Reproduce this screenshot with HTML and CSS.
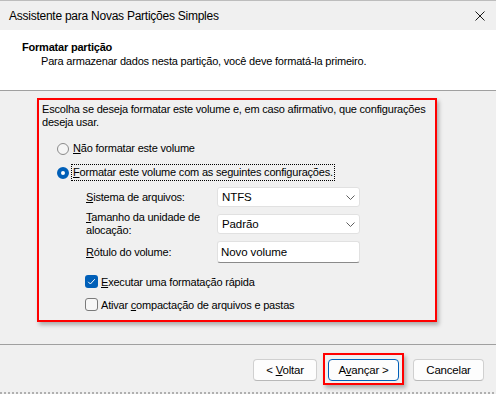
FILE: index.html
```html
<!DOCTYPE html>
<html lang="pt-BR">
<head>
<meta charset="utf-8">
<title>Assistente para Novas Partições Simples</title>
<link rel="stylesheet" href="styles.css">
</head>
<body>
<div class="win">
  <div class="topedge"></div>
  <div class="titlebar">
    <span class="title">Assistente para Novas Partições Simples</span>
    <svg class="close" width="10" height="10" viewBox="0 0 10 10"><path d="M0.5 0.5 L9.5 9.5 M9.5 0.5 L0.5 9.5" stroke="#1a1a1a" stroke-width="1" fill="none"/></svg>
  </div>
  <div class="header">
    <div class="h-title">Formatar partição</div>
    <div class="h-sub">Para armazenar dados nesta partição, você deve formatá-la primeiro.</div>
  </div>
  <div class="main">
    <div class="panel">
      <p class="intro">Escolha se deseja formatar este volume e, em caso afirmativo, que configurações<br>deseja usar.</p>
      <div class="opt-row first"><span class="radio"></span><span class="opt-text"><u>N</u>ão formatar este volume</span></div>
      <div class="opt-row second"><span class="radio on"></span><span class="opt-text focus"><u>F</u>ormatar este volume com as seguintes configurações.</span></div>
      <div class="form">
        <div class="lbl"><u>S</u>istema de arquivos:</div>
        <div class="select">NTFS<svg class="chev" width="9" height="5" viewBox="0 0 9 5"><path d="M0.5 0.5 L4.5 4.5 L8.5 0.5" stroke="#5f5f5f" stroke-width="1" fill="none"/></svg></div>
        <div class="lbl"><u>T</u>amanho da unidade de<br>alocação:</div>
        <div class="select">Padrão<svg class="chev" width="9" height="5" viewBox="0 0 9 5"><path d="M0.5 0.5 L4.5 4.5 L8.5 0.5" stroke="#5f5f5f" stroke-width="1" fill="none"/></svg></div>
        <div class="lbl"><u>R</u>ótulo do volume:</div>
        <div class="input">Novo volume</div>
      </div>
      <div class="chk-row first"><span class="check on"><svg width="13" height="13" viewBox="0 0 13 13"><path d="M3.2 6.8 L5.4 9 L9.8 4.2" stroke="#fff" stroke-width="1" fill="none"/></svg></span><span><u>E</u>xecutar uma formatação rápida</span></div>
      <div class="chk-row"><span class="check"></span><span>Ativar <u>c</u>ompactação de arquivos e pastas</span></div>
    </div>
  </div>
  <div class="footer">
    <button class="btn back">&lt; <u>V</u>oltar</button>
    <span class="hl"><button class="btn default">A<u>v</u>ançar &gt;</button></span>
    <button class="btn cancel">Cancelar</button>
  </div>
  <div class="bottomedge"></div>
</div>
</body>
</html>
```
FILE: styles.css
```css
html, body {
  margin: 0;
  padding: 0;
  background: #f0f0f0;
}
.win {
  width: 496px;
  height: 394px;
  display: flex;
  flex-direction: column;
  font-family: "Liberation Sans", Arial, sans-serif;
  font-size: 11px;
  letter-spacing: -0.2px;
  color: #000;
  background: #f0f0f0;
  overflow: hidden;
}
.topedge {
  height: 1px;
  background: #bdbdbd;
}
.titlebar {
  height: 29px;
  display: flex;
  align-items: center;
  justify-content: space-between;
  padding: 0 11px 0 9px;
  background: #f0f0f0;
}
.title {
  font-size: 12px;
  letter-spacing: -0.25px;
  color: #000;
}
.close {
  display: block;
  margin-top: 1px;
}
.header {
  background: #fff;
  border-bottom: 1px solid #a0a0a0;
  box-sizing: border-box;
  height: 61px;
  padding-top: 11px;
}
.h-title {
  font-weight: bold;
  padding-left: 22px;
  line-height: 13px;
}
.h-sub {
  padding-left: 41px;
  line-height: 13px;
  margin-top: 1px;
}
.main {
  height: 254px;
  padding-top: 7px;
  box-sizing: border-box;
  border-bottom: 1px solid #a0a0a0;
}
.panel {
  margin-left: 37px;
  width: 400px;
  height: 224px;
  box-sizing: border-box;
  border: 2px solid #ff0000;
  box-shadow: 2px 3px 4px rgba(0,0,0,0.28);
}
.intro {
  margin: 3px 0 0 3px;
  line-height: 13px;
  white-space: nowrap;
}
.opt-row {
  display: flex;
  align-items: center;
  height: 17px;
  padding-left: 18px;
}
.opt-row.first { margin-top: 11px; }
.opt-row.second { margin-top: 7px; }
.radio {
  width: 12px;
  height: 12px;
  box-sizing: border-box;
  border-radius: 50%;
  border: 1px solid #8a8a8a;
  background: #f5f5f5;
  margin-right: 4px;
  flex: none;
}
.radio.on {
  border: 4px solid #005fb8;
  background: #fff;
}
.opt-text {
  line-height: 15px;
}
.focus {
  outline: 1px dotted #000;
  margin-left: -1px;
  padding-left: 1px;
  padding-right: 1px;
}
.form {
  display: grid;
  grid-template-columns: 131px 143px;
  grid-template-rows: 20px 20px 22px;
  row-gap: 7px;
  margin: 6px 0 0 47px;
  align-items: center;
}
.lbl {
  line-height: 13px;
}
.select, .input {
  height: 100%;
  box-sizing: border-box;
  background: #fff;
  border: 1px solid #e1e1e1;
  border-radius: 3px;
  display: flex;
  align-items: center;
  justify-content: space-between;
  padding: 0 3px 0 4px;
  font-size: 11.5px;
  letter-spacing: -0.1px;
}
.input {
  border-bottom: 1px solid #8a8a8a;
  padding-left: 3px;
}
.chev {
  display: block;
  margin-right: 1px;
}
.chk-row {
  display: flex;
  align-items: center;
  height: 17px;
  padding-left: 46px;
}
.chk-row.first { margin-top: 10px; }
.chk-row + .chk-row { margin-top: 6px; }
.check {
  width: 13px;
  height: 13px;
  box-sizing: border-box;
  border: 1px solid #7a7a7a;
  border-radius: 3px;
  background: #f7f7f7;
  margin-right: 3px;
  flex: none;
}
.check.on {
  border: none;
  background: #005fb8;
}
.check svg { display: block; }
.footer {
  flex: 1;
  display: flex;
  justify-content: flex-end;
  align-items: flex-start;
  padding-right: 12px;
}
.btn {
  font-family: "Liberation Sans", Arial, sans-serif;
  font-size: 11.5px;
  letter-spacing: -0.2px;
  color: #000;
  height: 22px;
  box-sizing: border-box;
  background: #fdfdfd;
  border: 1px solid #d0d0d0;
  border-bottom-color: #b8b8b8;
  border-radius: 4px;
  padding: 0;
  margin-top: 14px;
}
.back { width: 64px; margin-right: 6px; }
.cancel { width: 71px; margin-left: 9px; }
.hl {
  margin-top: 8px;
  border: 2px solid #ff0000;
  padding: 4px 3px 2px 3px;
  box-shadow: 2px 3px 4px rgba(0,0,0,0.28);
  display: flex;
}
.default {
  width: 71px;
  margin-top: 0;
  border: 1px solid #005fb8;
}
.bottomedge {
  height: 2px;
  background: repeating-linear-gradient(90deg, #b0b0b0 0 2px, #f0f0f0 2px 4px);
}
```
